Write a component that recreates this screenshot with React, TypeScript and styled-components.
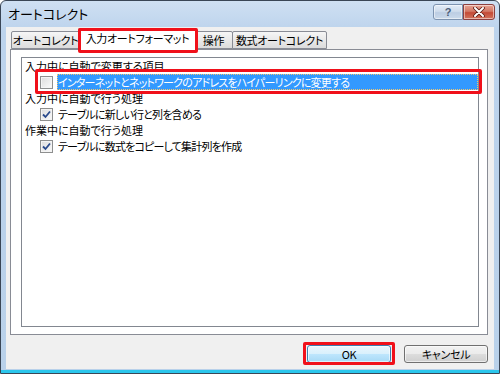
import styled, { createGlobalStyle } from "styled-components"

const GlobalStyle = createGlobalStyle`
  html, body {
    margin: 0;
    padding: 0;
  }
  body {
    width: 500px;
    height: 374px;
    overflow: hidden;
    background: #fff;
    font-family: "Noto Sans CJK JP", "Liberation Sans", sans-serif;
    font-size: 11px;
    font-feature-settings: "palt";
    color: #000;
  }
`

const Window = styled.div`
  width: 500px;
  height: 374px;
  box-sizing: border-box;
  border: 1px solid #3a4656;
  border-radius: 6px 6px 0 0;
  background: linear-gradient(#cfe0f3, #bcd3ec 30px, #b9d1ea);
  display: flex;
  flex-direction: column;
  box-shadow: inset 0 -3px 0 #2bc6ec;
`

const TitleBar = styled.div`
  height: 26px;
  display: flex;
  align-items: flex-start;
  padding: 3px 4px 0 7px;
  box-sizing: border-box;
`

const Title = styled.div`
  flex: 1;
  font-size: 13px;
  line-height: 20px;
`

const CaptionButton = styled.div<{ $close?: boolean }>`
  width: ${p => (p.$close ? 32 : 30)}px;
  height: 16px;
  box-sizing: border-box;
  display: flex;
  align-items: center;
  justify-content: center;
  border: 1px solid ${p => (p.$close ? "#8c3f3f" : "#7d93b0")};
  border-radius: ${p => (p.$close ? "0 3px 3px 0" : "3px 0 0 3px")};
  background: ${p =>
    p.$close
      ? "linear-gradient(#e8a393, #d37865 45%, #c44a36 55%, #d2745e)"
      : "linear-gradient(#e3ecf7, #cfdcec 45%, #bccde3 55%, #cbdaeb)"};
  box-shadow: inset 0 0 0 1px rgba(255, 255, 255, 0.5);
  font-family: "Liberation Sans", sans-serif;
  font-size: 11px;
  font-weight: bold;
  color: #4a5d78;
`

const Client = styled.div`
  flex: 1;
  margin: 0 5px 4px 5px;
  background: #f0f0f0;
  display: flex;
  flex-direction: column;
  padding: 1px 6px 6px 4px;
  min-height: 0;
`

const TabStrip = styled.div`
  display: flex;
  align-items: flex-end;
  padding-left: 2px;
  height: 21px;
  position: relative;
  z-index: 1;
`

const Tab = styled.div<{ $active?: boolean; $w: number }>`
  position: relative;
  box-sizing: border-box;
  flex: none;
  width: ${p => p.$w}px;
  height: ${p => (p.$active ? 22 : 18)}px;
  margin: ${p => (p.$active ? "0 -2px -1px" : "0 0 0 -1px")};
  border: 1px solid #898c95;
  border-bottom: ${p => (p.$active ? "none" : "1px solid #898c95")};
  border-radius: 2px 2px 0 0;
  background: ${p => (p.$active ? "#fff" : "linear-gradient(#f6f6f6, #e9e9e9 50%, #dcdcdc)")};
  line-height: ${p => (p.$active ? 19 : 16)}px;
  text-align: center;
  letter-spacing: -0.3px;
  white-space: nowrap;
  z-index: ${p => (p.$active ? 2 : 1)};
`

const RedBox = styled.div<{ $t: number; $r: number; $b: number; $l: number }>`
  position: absolute;
  top: ${p => p.$t}px;
  right: ${p => p.$r}px;
  bottom: ${p => p.$b}px;
  left: ${p => p.$l}px;
  border: 3px solid #f0101a;
  border-radius: 2px;
  pointer-events: none;
  z-index: 5;
`

const Panel = styled.div`
  flex: 1;
  display: flex;
  border: 1px solid #898c95;
  background: #fff;
  padding: 7px 8px 7px 10px;
  min-height: 0;
`

const ListBox = styled.div`
  flex: 1;
  border: 1px solid #828790;
  background: #fff;
`

const Heading = styled.div`
  height: 16px;
  line-height: 16px;
  padding-left: 3px;
  white-space: nowrap;
`

const CheckRow = styled.div`
  position: relative;
  height: 16px;
  display: flex;
  align-items: center;
  padding-left: 18px;
  gap: 4px;
`

const Box = styled.span`
  width: 13px;
  height: 13px;
  box-sizing: border-box;
  border: 1px solid #8e8f8f;
  background: linear-gradient(135deg, #dcdcdc, #fbfbfb);
  box-shadow: inset 0 0 0 1px #f4f4f4;
  display: flex;
  align-items: center;
  justify-content: center;
  flex: none;
`

const Label = styled.span<{ $selected?: boolean }>`
  flex: 1;
  height: 16px;
  line-height: 16px;
  box-sizing: border-box;
  padding-left: 1px;
  white-space: nowrap;
  letter-spacing: -0.8px;
  background: ${p => (p.$selected ? "#3399ff" : "transparent")};
  color: ${p => (p.$selected ? "#fff" : "#000")};
  outline: ${p => (p.$selected ? "1px dotted #f5c56b" : "none")};
  outline-offset: -1px;
`

const Footer = styled.div`
  display: flex;
  justify-content: flex-end;
  gap: 13px;
  padding-top: 10px;
`

const Button = styled.div<{ $default?: boolean }>`
  position: relative;
  width: 84px;
  height: 18px;
  box-sizing: border-box;
  border: 1px solid ${p => (p.$default ? "#3c7fb1" : "#707070")};
  border-radius: 3px;
  background: ${p =>
    p.$default
      ? "linear-gradient(#eaf6fd, #d9f0fc 50%, #bee6fd 50%, #a7d9f5)"
      : "linear-gradient(#f2f2f2, #ebebeb 50%, #dddddd 50%, #cfcfcf)"};
  box-shadow: inset 0 0 0 1px rgba(255, 255, 255, 0.6);
  text-align: center;
  line-height: 16px;
  letter-spacing: -0.3px;
`

const Check = () => (
  <svg width="9" height="9" viewBox="0 0 9 9">
    <path d="M1 4.5 L3.5 7 L8 1.5" fill="none" stroke="#2a4a8c" strokeWidth="1.8" />
  </svg>
)

const CloseGlyph = () => (
  <svg width="12" height="10" viewBox="0 0 12 10">
    <path d="M2 1 L10 9 M10 1 L2 9" stroke="#5a1a12" strokeWidth="3.6" strokeLinecap="round" />
    <path d="M2 1 L10 9 M10 1 L2 9" stroke="#fff" strokeWidth="2" strokeLinecap="round" />
  </svg>
)

const App = () => (
  <>
    <GlobalStyle />
    <Window>
      <TitleBar>
        <Title>オートコレクト</Title>
        <CaptionButton>?</CaptionButton>
        <CaptionButton $close>
          <CloseGlyph />
        </CaptionButton>
      </TitleBar>
      <Client>
        <TabStrip>
          <Tab $w={69}>オートコレクト</Tab>
          <Tab $w={119} $active>
            入力オートフォーマット
            <RedBox $t={-1} $r={-2} $b={-3} $l={-1} />
          </Tab>
          <Tab $w={39}>操作</Tab>
          <Tab $w={95}>数式オートコレクト</Tab>
        </TabStrip>
        <Panel>
          <ListBox>
            <Heading>入力中に自動で変更する項目</Heading>
            <CheckRow>
              <Box />
              <Label $selected>インターネットとネットワークのアドレスをハイパーリンクに変更する</Label>
              <RedBox $t={-5} $r={-4} $b={-4} $l={13} />
            </CheckRow>
            <Heading>入力中に自動で行う処理</Heading>
            <CheckRow>
              <Box>
                <Check />
              </Box>
              <Label>テーブルに新しい行と列を含める</Label>
            </CheckRow>
            <Heading>作業中に自動で行う処理</Heading>
            <CheckRow>
              <Box>
                <Check />
              </Box>
              <Label>テーブルに数式をコピーして集計列を作成</Label>
            </CheckRow>
          </ListBox>
        </Panel>
        <Footer>
          <Button $default>
            OK
            <RedBox $t={-4} $r={-5} $b={-3} $l={-5} />
          </Button>
          <Button>キャンセル</Button>
        </Footer>
      </Client>
    </Window>
  </>
)

export default App
